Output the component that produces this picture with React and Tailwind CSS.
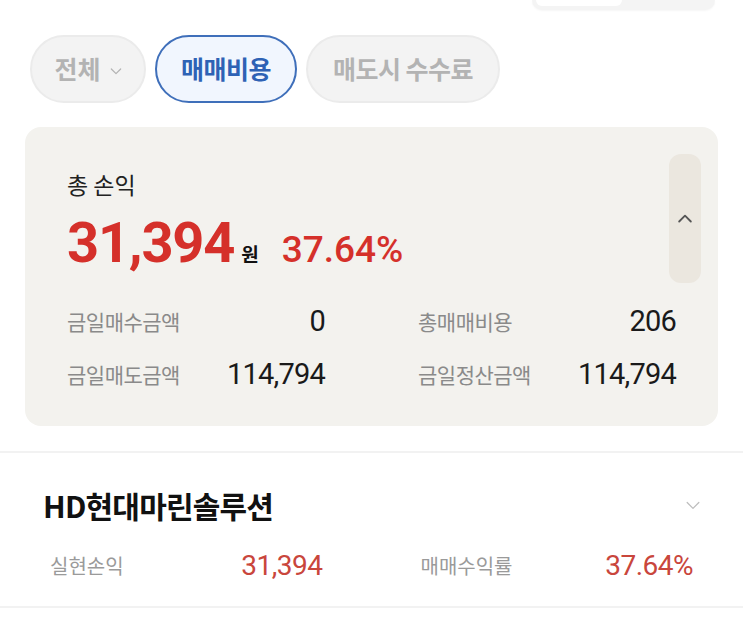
import React from "react";

const KR = { fontFamily: '"Noto Sans CJK KR", "Noto Sans", sans-serif' };
const NUM = { fontFamily: 'Roboto, "Noto Sans CJK KR", sans-serif' };

function ChevronDown({ className, stroke = "currentColor", sw = 2 }) {
  return (
    <svg viewBox="0 0 24 24" className={className} fill="none" stroke={stroke} strokeWidth={sw} strokeLinecap="round" strokeLinejoin="round">
      <path d="M5 9l7 7 7-7" />
    </svg>
  );
}

function ChevronUp({ className, stroke = "currentColor", sw = 2 }) {
  return (
    <svg viewBox="0 0 24 24" className={className} fill="none" stroke={stroke} strokeWidth={sw} strokeLinecap="round" strokeLinejoin="round">
      <path d="M5 15l7-7 7 7" />
    </svg>
  );
}

function StatRow({ label, value }) {
  return (
    <div className="flex items-center justify-between h-[40px]">
      <span className="text-[21px] text-[#8a8a8a] tracking-[-0.5px]" style={KR}>{label}</span>
      <span className="text-[29px] text-[#1a1a1a] tracking-[-0.8px]" style={NUM}>{value}</span>
    </div>
  );
}

export default function App() {
  return (
    <div className="w-[743px] h-[627px] bg-white overflow-hidden" style={KR}>
      {/* top segmented control remnant */}
      <div className="flex justify-end pr-[28px]">
        <div className="w-[183px] h-[10px] bg-[#f4f4f4] rounded-b-[10px] shadow-[0_1px_2px_rgba(0,0,0,0.04)] flex">
          <div className="ml-[4px] w-[86px] h-[6px] bg-white rounded-b-[6px]" />
        </div>
      </div>

      {/* filter pills */}
      <div className="flex gap-[9px] pl-[30px] mt-[25px]">
        <div className="h-[68px] w-[116px] rounded-full bg-[#f3f3f3] border-2 border-[#ebebeb] flex items-center justify-center gap-[7px] pl-[2px]">
          <span className="text-[25px] font-bold text-[#b3b3b3]">전체</span>
          <ChevronDown className="w-[16px] h-[16px] text-[#b3b3b3] mt-[3px]" sw={1.8} />
        </div>
        <div className="h-[68px] w-[142px] rounded-full bg-[#f1f6fe] border-2 border-[#3f6fba] flex items-center justify-center">
          <span className="text-[25px] font-bold text-[#2e62b5] tracking-[-0.5px]">매매비용</span>
        </div>
        <div className="h-[68px] w-[194px] rounded-full bg-[#f3f3f3] border-2 border-[#ebebeb] flex items-center justify-center">
          <span className="text-[25px] font-bold text-[#b3b3b3] tracking-[-0.5px]">매도시 수수료</span>
        </div>
      </div>

      {/* summary card */}
      <div className="mx-[25px] mt-[24px] h-[299px] bg-[#f3f2ee] rounded-[16px] pl-[42px] pr-[17px] pt-[27px]">
        <div className="flex justify-between">
          <div className="pt-[15px]">
            <div className="text-[23px] leading-[30px] text-[#222]">총 손익</div>
            <div className="flex items-baseline mt-[16px]">
              <span className="text-[56px] leading-[56px] font-bold text-[#d5302a] tracking-[-1.2px]" style={NUM}>31,394</span>
              <span className="ml-[7px] text-[19px] font-bold text-[#111]">원</span>
              <span className="ml-[23px] text-[37px] font-medium text-[#d5302a]" style={NUM}>37.64%</span>
            </div>
          </div>
          <div className="w-[32px] h-[129px] bg-[#ebe7df] rounded-[12px] flex items-center justify-center">
            <ChevronUp className="w-[20px] h-[20px]" stroke="#555" sw={2.2} />
          </div>
        </div>
        <div className="pr-[25px] mt-[19px] grid grid-cols-2 gap-x-[93px] gap-y-[13px]">
          <StatRow label="금일매수금액" value="0" />
          <StatRow label="총매매비용" value="206" />
          <StatRow label="금일매도금액" value="114,794" />
          <StatRow label="금일정산금액" value="114,794" />
        </div>
      </div>

      {/* divider */}
      <div className="mt-[25px] h-[2px] bg-[#f2f2f2]" />

      {/* stock section */}
      <div className="pl-[43px] pr-[40px] pt-[34px]">
        <div className="flex items-center justify-between h-[36px]">
          <span className="text-[30px] font-bold text-[#111] tracking-[-0.8px]">HD현대마린솔루션</span>
          <ChevronDown className="w-[20px] h-[20px]" stroke="#bdbdbd" sw={1.5} />
        </div>
        <div className="grid grid-cols-2 gap-x-[98px] mt-[25px] ml-[7px] pr-[10px]">
          <div className="flex items-center justify-between h-[36px]">
            <span className="text-[20px] text-[#9a9a9a]">실현손익</span>
            <span className="text-[28px] text-[#c9463c] tracking-[-0.5px]" style={NUM}>31,394</span>
          </div>
          <div className="flex items-center justify-between h-[36px]">
            <span className="text-[20px] text-[#9a9a9a]">매매수익률</span>
            <span className="text-[28px] text-[#c9463c] tracking-[-0.5px]" style={NUM}>37.64%</span>
          </div>
        </div>
      </div>
      <div className="mt-[22px] h-[2px] bg-[#f2f2f2]" />
    </div>
  );
}
